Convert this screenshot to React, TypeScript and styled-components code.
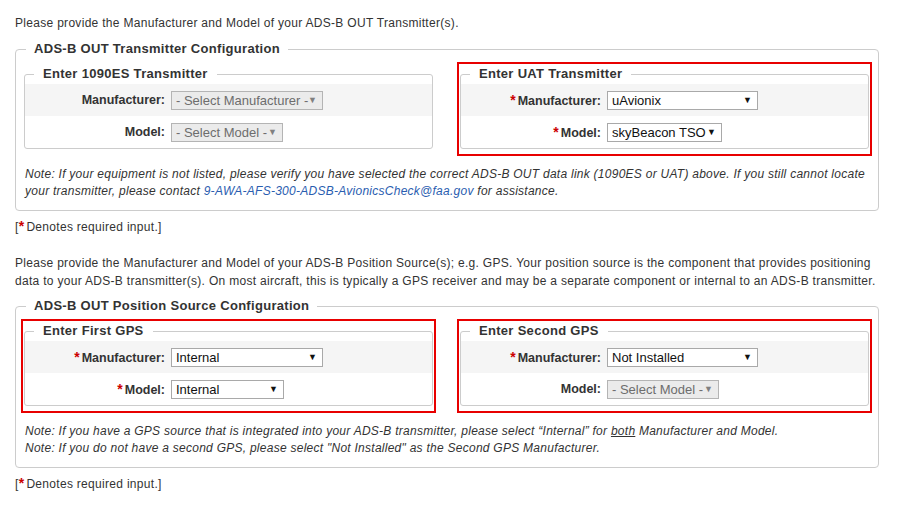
import styled, { createGlobalStyle } from 'styled-components';

const GlobalStyle = createGlobalStyle`
  body {
    margin: 0;
    background: #fff;
    color: #333;
    font-family: "Liberation Sans", Arial, sans-serif;
    font-size: 12px;
  }
`;

const Page = styled.div`
  padding: 14px 23px 0 15px;
`;

const Text = styled.p<{ $after?: number }>`
  margin: 0 0 ${({ $after }) => $after ?? 0}px;
  line-height: 18px;
  letter-spacing: 0.3px;
`;

const Section = styled.fieldset`
  margin: 0;
  padding: 0 6px 10px 5px;
  min-width: 0;
  border: 1px solid #ccc;
  border-radius: 4px;
`;

const SectionTitle = styled.legend`
  margin-left: 5px;
  padding: 0 8px;
  font-size: 13px;
  font-weight: bold;
  letter-spacing: 0.3px;
  line-height: 16px;
  color: #333;
`;

const Columns = styled.div`
  display: grid;
  grid-template-columns: 1fr 1fr;
  column-gap: 21px;
  margin-top: 5px;
`;

const Highlight = styled.div<{ $marked?: boolean }>`
  border: 2px solid ${({ $marked }) => ($marked ? '#e80000' : 'transparent')};
  padding: 0 1px 5px;
`;

const Group = styled.fieldset`
  margin: 0;
  padding: 0;
  min-width: 0;
  border: 1px solid #ccc;
  border-radius: 3px;
`;

const GroupTitle = styled.legend`
  margin-left: 9px;
  padding: 0 9px;
  font-size: 13px;
  font-weight: bold;
  letter-spacing: 0.3px;
  line-height: 20px;
  color: #333;
`;

const Row = styled.div<{ $shaded?: boolean }>`
  display: grid;
  grid-template-columns: 140px 1fr;
  column-gap: 6px;
  align-items: center;
  height: 32px;
  background: ${({ $shaded }) => ($shaded ? '#f5f5f5' : 'transparent')};
`;

const Label = styled.label`
  text-align: right;
  font-size: 12.5px;
  font-weight: bold;
  color: #333;
`;

const Star = styled.span`
  color: #c00;
  font-weight: bold;
  font-size: 14px;
  margin-right: 2px;
`;

const SelectBox = styled.span<{ $width: number; $disabled?: boolean }>`
  position: relative;
  display: inline-block;
  vertical-align: middle;
  width: ${({ $width }) => $width}px;
  height: 19px;

  &::after {
    content: '▼';
    position: absolute;
    right: 6px;
    top: 4px;
    font-size: 9px;
    line-height: 11px;
    color: ${({ $disabled }) => ($disabled ? '#808080' : '#111')};
    pointer-events: none;
  }
`;

const Select = styled.select`
  appearance: none;
  box-sizing: border-box;
  width: 100%;
  height: 19px;
  margin: 0;
  padding: 0 8px 0 4px;
  border: 1px solid #a9a9a9;
  border-radius: 0;
  background: #fff;
  color: #111;
  font-family: "Liberation Sans", Arial, sans-serif;
  font-size: 13px;
  line-height: 17px;

  &:disabled {
    background: #ebebeb;
    color: #6d6d6d;
    border-color: #b4b4b4;
    opacity: 1;
  }
`;

const Note = styled.div`
  margin-top: 10px;
  padding-left: 4px;
  font-style: italic;
  line-height: 17px;
  letter-spacing: 0.26px;
  color: #333;
`;

const Mail = styled.a`
  color: #2a5db0;
  text-decoration: none;
`;

const Legend = styled.p<{ $after: number }>`
  margin: 6px 0 ${({ $after }) => $after}px;
  line-height: 18px;
  letter-spacing: 0.3px;
`;

type Field = {
  label: string;
  value: string;
  width: number;
  required?: boolean;
  disabled?: boolean;
};

const FieldRow = ({ field, shaded }: { field: Field; shaded?: boolean }) => (
  <Row $shaded={shaded}>
    <Label>
      {field.required && <Star>*</Star>}
      {field.label}:
    </Label>
    <div>
      <SelectBox $width={field.width} $disabled={field.disabled}>
        <Select disabled={field.disabled} defaultValue={field.value}>
          <option>{field.value}</option>
        </Select>
      </SelectBox>
    </div>
  </Row>
);

const Box = ({ title, fields, marked }: { title: string; fields: Field[]; marked?: boolean }) => (
  <Highlight $marked={marked}>
    <Group>
      <GroupTitle>{title}</GroupTitle>
      <FieldRow field={fields[0]} shaded />
      <FieldRow field={fields[1]} />
    </Group>
  </Highlight>
);

const Required = ({ after }: { after: number }) => (
  <Legend $after={after}>
    [<Star>*</Star>Denotes required input.]
  </Legend>
);

export default function App() {
  return (
    <>
      <GlobalStyle />
      <Page>
        <Text $after={9}>Please provide the Manufacturer and Model of your ADS-B OUT Transmitter(s).</Text>
        <Section>
          <SectionTitle>ADS-B OUT Transmitter Configuration</SectionTitle>
          <Columns>
            <Box
              title="Enter 1090ES Transmitter"
              fields={[
                { label: 'Manufacturer', value: '- Select Manufacturer -', width: 152, disabled: true },
                { label: 'Model', value: '- Select Model -', width: 112, disabled: true },
              ]}
            />
            <Box
              marked
              title="Enter UAT Transmitter"
              fields={[
                { label: 'Manufacturer', value: 'uAvionix', width: 151, required: true },
                { label: 'Model', value: 'skyBeacon TSO', width: 115, required: true },
              ]}
            />
          </Columns>
          <Note>
            Note: If your equipment is not listed, please verify you have selected the correct ADS-B OUT data link
            (1090ES or UAT) above. If you still cannot locate your transmitter, please contact{' '}
            <Mail href="mailto:9-AWA-AFS-300-ADSB-AvionicsCheck@faa.gov">9-AWA-AFS-300-ADSB-AvionicsCheck@faa.gov</Mail>{' '}
            for assistance.
          </Note>
        </Section>
        <Required after={18} />
        <Text $after={8}>
          Please provide the Manufacturer and Model of your ADS-B Position Source(s); e.g. GPS. Your position source is
          the component that provides positioning data to your ADS-B transmitter(s). On most aircraft, this is typically
          a GPS receiver and may be a separate component or internal to an ADS-B transmitter.
        </Text>
        <Section>
          <SectionTitle>ADS-B OUT Position Source Configuration</SectionTitle>
          <Columns>
            <Box
              marked
              title="Enter First GPS"
              fields={[
                { label: 'Manufacturer', value: 'Internal', width: 152, required: true },
                { label: 'Model', value: 'Internal', width: 113, required: true },
              ]}
            />
            <Box
              marked
              title="Enter Second GPS"
              fields={[
                { label: 'Manufacturer', value: 'Not Installed', width: 151, required: true },
                { label: 'Model', value: '- Select Model -', width: 112, disabled: true },
              ]}
            />
          </Columns>
          <Note>
            Note: If you have a GPS source that is integrated into your ADS-B transmitter, please select “Internal” for{' '}
            <u>both</u> Manufacturer and Model.
            <br />
            Note: If you do not have a second GPS, please select "Not Installed" as the Second GPS Manufacturer.
          </Note>
        </Section>
        <Required after={17} />
        <Text>Please provide the location of your ADS-B OUT Transmitter(s).</Text>
      </Page>
    </>
  );
}
